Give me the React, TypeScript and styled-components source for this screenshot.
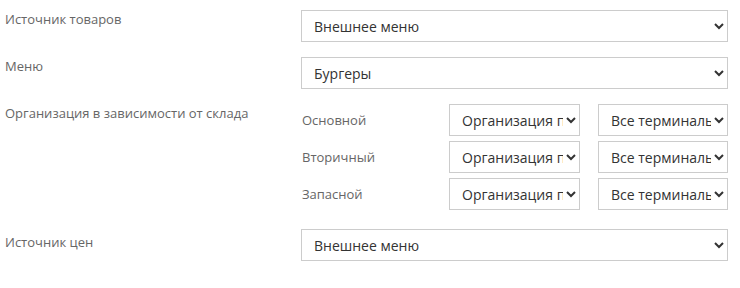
import React from "react";
import styled, { createGlobalStyle } from "styled-components";

const Global = createGlobalStyle`
	body {
		margin: 0;
		background: #fff;
		font-family: "Open Sans", "Liberation Sans", sans-serif;
	}
`;

const Form = styled.div`
	padding: 10px 12px 0 4px;
	width: 740px;
	box-sizing: border-box;
`;

const Row = styled.div<{ gapBelow?: number }>`
	display: grid;
	grid-template-columns: 297px 1fr;
	margin-bottom: ${({ gapBelow }) => gapBelow ?? 15}px;
`;

const Label = styled.div<{ shift?: number }>`
	font-size: 13px;
	line-height: 18px;
	color: #666;
	padding-left: 1px;
	padding-top: ${({ shift }) => shift ?? 0}px;
`;

const Select = styled.select`
	width: 100%;
	min-width: 0;
	height: 32px;
	box-sizing: border-box;
	border: 1px solid #ccc;
	border-radius: 0;
	background: #fff;
	color: #333;
	font-family: "Open Sans", "Liberation Sans", sans-serif;
	font-size: 14px;
	padding: 0 0 0 8px;
	outline: none;
`;

const SubList = styled.div`
	display: flex;
	flex-direction: column;
	gap: 5px;
`;

const SubRow = styled.div`
	display: grid;
	grid-template-columns: 148px 131px 1fr;
	align-items: center;
`;

const SubLabel = styled.div`
	font-size: 13px;
	color: #666;
	padding-left: 1px;
`;

const TerminalSelect = styled(Select)`
	margin-left: 18px;
	width: calc(100% - 18px);
`;

const warehouses = ["Основной", "Вторичный", "Запасной"];

export default function App() {
	return (
		<Form>
			<Global />
			<Row>
				<Label>Источник товаров</Label>
				<Select defaultValue="ext">
					<option value="ext">Внешнее меню</option>
				</Select>
			</Row>
			<Row>
				<Label>Меню</Label>
				<Select defaultValue="burgers">
					<option value="burgers">Бургеры</option>
				</Select>
			</Row>
			<Row gapBelow={19}>
				<Label>Организация в зависимости от склада</Label>
				<SubList>
					{warehouses.map((w) => (
						<SubRow key={w}>
							<SubLabel>{w}</SubLabel>
							<Select defaultValue="org">
								<option value="org">Организация по умолчанию</option>
							</Select>
							<TerminalSelect defaultValue="all">
								<option value="all">Все терминальные группы</option>
							</TerminalSelect>
						</SubRow>
					))}
				</SubList>
			</Row>
			<Row>
				<Label shift={4}>Источник цен</Label>
				<Select defaultValue="ext">
					<option value="ext">Внешнее меню</option>
				</Select>
			</Row>
		</Form>
	);
}
